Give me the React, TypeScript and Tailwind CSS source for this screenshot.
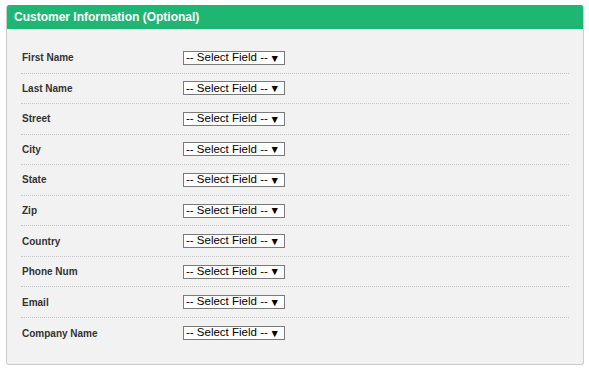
import React from "react";

const fields = [
  "First Name",
  "Last Name",
  "Street",
  "City",
  "State",
  "Zip",
  "Country",
  "Phone Num",
  "Email",
  "Company Name",
];

function FakeSelect() {
  return (
    <div className="flex items-center w-[102px] h-[14px] border border-[#7a7a7a] bg-white text-black text-[11.5px] leading-none pl-[2px] pr-[4px] justify-between">
      <span className="whitespace-nowrap">-- Select Field --</span>
      <span className="text-[10.5px] leading-none">▼</span>
    </div>
  );
}

export default function App() {
  return (
    <div
      className="bg-white w-[589px] h-[368px] pt-[5px] pl-[6px]"
      style={{ fontFamily: '"Liberation Sans", Arial, sans-serif' }}
    >
      <div className="w-[578px] rounded-[3px] border border-[#cccccc] border-t-0 overflow-hidden bg-[#f2f2f2]">
        <div className="h-[24px] bg-[#1fb573] flex items-center pl-[7px] text-white font-bold text-[12px] leading-none">
          Customer Information (Optional)
        </div>
        <div className="pt-[14px] pb-[16px] px-[14px]">
          {fields.map((f, i) => (
            <div
              key={f}
              className={
                "flex items-center h-[30.56px] " +
                (i < fields.length - 1 ? "border-b border-dotted border-[#c4c4c4]" : "")
              }
            >
              <div className="w-[162px] pl-px text-[10px] font-bold text-[#333333]">{f}</div>
              <FakeSelect />
            </div>
          ))}
        </div>
      </div>
    </div>
  );
}
